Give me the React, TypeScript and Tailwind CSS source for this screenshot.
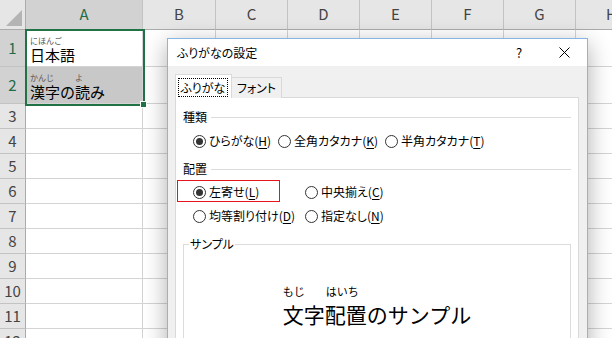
import React from 'react'

const cols = [
  { k: 'A', w: 'w-[117px]' },
  { k: 'B', w: 'w-[73px]' },
  { k: 'C', w: 'w-[72px]' },
  { k: 'D', w: 'w-[72px]' },
  { k: 'E', w: 'w-[72px]' },
  { k: 'F', w: 'w-[72px]' },
  { k: 'G', w: 'w-[72px]' },
  { k: 'H', w: 'w-[72px]' },
]

const rows = [1, 2, 3, 4, 5, 6, 7, 8, 9, 10, 11, 12]

function CellA({ row }: { row: number }) {
  if (row === 1) {
    return (
      <div className="flex flex-col pl-[4px] pt-[6px]">
        <span className="text-[8px] leading-[10px] text-[#555]">にほんご</span>
        <span className="text-[15px] leading-[18px] text-black">日本語</span>
      </div>
    )
  }
  if (row === 2) {
    return (
      <div className="flex flex-col pl-[4px] pt-[6px]">
        <span className="flex text-[8px] leading-[10px] text-[#555]">
          <span className="w-[45px]">かんじ</span>
          <span>よ</span>
        </span>
        <span className="text-[15px] leading-[18px] text-black">漢字の読み</span>
      </div>
    )
  }
  return null
}

function Sheet() {
  return (
    <div className="relative flex flex-col">
      {/* column headers */}
      <div className="flex h-[30px]">
        <div className="relative shrink-0 w-[26px] border-r border-b border-[#ababab] bg-[#e6e6e6]">
          <div className="absolute right-[3px] bottom-[3px] w-0 h-0 border-l-[16px] border-l-transparent border-b-[16px] border-b-[#b4b4b4]"></div>
        </div>
        {cols.map((c) => (
          <div
            key={c.k}
            className={`${c.w} shrink-0 flex items-center justify-center border-r border-b border-r-[#c3c3c3] border-b-[#ababab] text-[15px] ${
              c.k === 'A' ? 'bg-[#d2d2d2] text-[#1e6b48]' : 'bg-[#e6e6e6] text-[#444]'
            }`}
          >
            {c.k}
          </div>
        ))}
      </div>

      {rows.map((r) => (
        <div key={r} className={`flex ${r <= 2 ? 'h-[37px]' : 'h-[25px]'}`}>
          <div
            className={`w-[26px] shrink-0 flex items-center justify-center border-r border-b border-r-[#ababab] border-b-[#c3c3c3] text-[15px] ${
              r <= 2 ? 'bg-[#d2d2d2] text-[#1e6b48]' : 'bg-[#e6e6e6] text-[#444]'
            }`}
          >
            {r}
          </div>
          {cols.map((c) => (
            <div
              key={c.k}
              className={`${c.w} shrink-0 border-r border-b border-[#d4d4d4] ${c.k === 'A' && r === 2 ? 'bg-[#c8c8c8]' : 'bg-white'}`}
            >
              {c.k === 'A' && <CellA row={r} />}
            </div>
          ))}
        </div>
      ))}

      {/* selection A1:A2 */}
      <div className="absolute left-[25px] top-[29px] w-[120px] h-[77px] border-2 border-[#217346]"></div>
      <div className="absolute left-[140px] top-[101px] w-[7px] h-[7px] bg-[#217346] border border-white"></div>
    </div>
  )
}

function Radio({ checked, children, w }: { checked?: boolean; children: React.ReactNode; w: string }) {
  return (
    <div className={`${w} flex items-center`}>
      <span className="w-[13px] h-[13px] shrink-0 rounded-full border border-[#333] bg-white flex items-center justify-center">
        {checked && <span className="w-[7px] h-[7px] rounded-full bg-[#333]"></span>}
      </span>
      <span className="ml-[3px] whitespace-nowrap">{children}</span>
    </div>
  )
}

function U({ c }: { c: string }) {
  return <span className="underline underline-offset-[2px]">{c}</span>
}

function GroupTitle({ title }: { title: string }) {
  return (
    <div className="flex items-center h-[16px]">
      <span>{title}</span>
      <div className="flex-1 h-px bg-[#dcdcdc] ml-[4px]"></div>
    </div>
  )
}

function FuriganaDialog() {
  return (
    <div className="absolute left-[167px] top-[38px] w-[421px] h-[320px] border border-[#86b6e6] bg-[#f0f0f0] shadow-[0_6px_22px_rgba(0,0,0,0.32)] text-[12px] text-black flex flex-col [font-feature-settings:'palt']">
      {/* title bar */}
      <div className="h-[30px] bg-white flex items-center">
        <span className="pl-[9px] flex-1">ふりがなの設定</span>
        <span className="w-[44px] text-center text-[13px]">?</span>
        <span className="w-[46px] flex items-center justify-center">
          <svg width="11" height="11" viewBox="0 0 11 11">
            <path d="M0.5 0.5 L10.5 10.5 M10.5 0.5 L0.5 10.5" stroke="#000" strokeWidth="1" fill="none" />
          </svg>
        </span>
      </div>

      <div className="pt-[8px] pl-[7px]">
        {/* tabs */}
        <div className="flex items-end h-[24px]">
          <div className="relative z-10 w-[57px] h-[24px] bg-white border border-b-0 border-[#d9d9d9] pl-[2px] pt-[3px]">
            <div className="w-[50px] h-[19px] border border-dotted border-black flex items-center justify-center">
              ふりがな
            </div>
          </div>
          <div className="w-[50px] h-[21px] bg-[#f0f0f0] border border-l-0 border-b-0 border-[#d9d9d9] flex items-center justify-center">
            フォント
          </div>
        </div>

        {/* panel */}
        <div className="mt-[-1px] w-[404px] h-[260px] bg-white border border-[#d9d9d9] px-[7px] pt-[11px] flex flex-col">
          <GroupTitle title="種類" />
          <div className="flex h-[16px] mt-[8px] pl-[10px]">
            <Radio checked w="w-[85px]">
              ひらがな(<U c="H" />)
            </Radio>
            <Radio w="w-[107px]">
              全角カタカナ(<U c="K" />)
            </Radio>
            <Radio w="w-[120px]">
              半角カタカナ(<U c="T" />)
            </Radio>
          </div>

          <div className="mt-[12px]">
            <GroupTitle title="配置" />
          </div>
          <div className="relative flex h-[16px] mt-[7px] pl-[10px]">
            <div className="absolute left-[-6px] top-[-4px] w-[103px] h-[22px] border border-[#e8141b]"></div>
            <Radio checked w="w-[112px]">
              左寄せ(<U c="L" />)
            </Radio>
            <Radio w="w-[110px]">
              中央揃え(<U c="C" />)
            </Radio>
          </div>
          <div className="flex h-[16px] mt-[8px] pl-[10px]">
            <Radio w="w-[112px]">
              均等割り付け(<U c="D" />)
            </Radio>
            <Radio w="w-[110px]">
              指定なし(<U c="N" />)
            </Radio>
          </div>

          <fieldset className="mt-[12px] border border-[#dcdcdc] h-[120px] min-w-0">
            <legend className="ml-[5px] px-[1px] leading-[16px]">サンプル</legend>
            <div className="flex flex-col items-center pt-[32px] [font-feature-settings:normal]">
              <div className="flex flex-col">
                <div className="flex text-[11px] leading-[14px]">
                  <span className="w-[43px]">もじ</span>
                  <span>はいち</span>
                </div>
                <div className="mt-[3px] text-[21px] leading-[26px]">文字配置のサンプル</div>
              </div>
            </div>
          </fieldset>
        </div>
      </div>
    </div>
  )
}

export default function App() {
  return (
    <div className="relative w-[612px] h-[338px] overflow-hidden bg-white font-['Noto_Sans_CJK_JP','Noto_Sans',sans-serif]">
      <Sheet />
      <FuriganaDialog />
    </div>
  )
}
